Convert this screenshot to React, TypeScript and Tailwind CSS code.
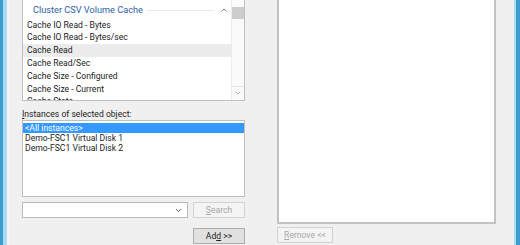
import { ChevronDown, ChevronUp } from "lucide-react";

const counters = [
  "Cache IO Read - Bytes",
  "Cache IO Read - Bytes/sec",
  "Cache Read",
  "Cache Read/Sec",
  "Cache Size - Configured",
  "Cache Size - Current",
  "Cache State",
];

const instances = ["<All instances>", "Demo-FSC1 Virtual Disk 1", "Demo-FSC1 Virtual Disk 2"];

const font = { fontFamily: 'Roboto, "Noto Sans", sans-serif' };

export default function App() {
  return (
    <div
      className="flex h-[245px] w-[520px] overflow-hidden bg-[#f0f0f0] text-[8.6px] leading-none text-[#1b1b1b]"
      style={font}
    >
      {/* window frame, left */}
      <div className="w-[3px] shrink-0 bg-[#3b9ccd]" />
      <div className="w-[4px] shrink-0 bg-[#a8dcf0]" />
      <div className="w-[2px] shrink-0 bg-[#f7f7f7]" />

      <div className="flex flex-1 pl-[13px]">
        {/* left column */}
        <div className="flex w-[223px] shrink-0 flex-col">
          <div className="flex h-[101px] border-x border-b border-[#bfbfbf] bg-white">
            <div className="relative flex-1 overflow-hidden">
              <div className="flex h-[18.5px] items-start pt-[4.5px] pl-[10px] pr-[3px]">
                <span className="text-[9.2px] text-[#2d62a6]">Cluster CSV Volume Cache</span>
                <div className="mr-[6px] ml-[4px] mt-[5px] h-px flex-1 bg-[#e6e9ee]" />
                <ChevronUp size={8} strokeWidth={2.2} className="mt-[1px] text-[#555]" />
              </div>
              {counters.map((c) => (
                <div
                  key={c}
                  className={`flex h-[12.8px] items-center pl-[4px] ${c === "Cache Read" ? "bg-[#ececec]" : ""}`}
                >
                  {c}
                </div>
              ))}
            </div>
            {/* scrollbar */}
            <div className="flex w-[13px] shrink-0 flex-col border-l border-[#ececec] bg-[#fafafa]">
              <div className="mt-[7px] h-[12px] bg-[#cdcdcd]" />
              <div className="flex-1" />
              <div className="mb-[2px] flex h-[12px] items-center justify-center border-t border-[#e4e4e4]">
                <ChevronDown size={8} strokeWidth={2} className="text-[#888]" />
              </div>
            </div>
          </div>

          <div className="flex h-[19px] items-start pt-[9px]">
            <span>
              <span className="underline">I</span>nstances of selected object:
            </span>
          </div>

          <div className="h-[77px] border border-[#bfbfbf] bg-white pt-[2px]">
            {instances.map((i, idx) => (
              <div
                key={i}
                className={`flex h-[10px] items-center pl-[2px] ${idx === 0 ? "bg-[#3399ff] text-white" : ""}`}
              >
                {i}
              </div>
            ))}
          </div>

          <div className="mt-[5px] flex h-[16px] gap-[5px]">
            <div className="flex flex-1 items-center justify-end border border-[#b9b9b9] bg-white pr-[4px]">
              <ChevronDown size={9} strokeWidth={2.4} className="text-[#444]" />
            </div>
            <div className="flex w-[52px] items-center justify-center border border-[#d2d2d2] bg-[#f4f4f4] text-[#a8a8a8]">
              <span>
                <span className="underline">S</span>earch
              </span>
            </div>
          </div>

          <div className="mt-[10px] flex justify-end">
            <div className="flex h-[16px] w-[52px] items-center justify-center border border-[#adadad] bg-[#e1e1e1]">
              <span>
                Ad<span className="underline">d</span> &gt;&gt;
              </span>
            </div>
          </div>
        </div>

        {/* right column */}
        <div className="ml-[32px] flex w-[219px] shrink-0 flex-col">
          <div className="h-[224px] border-x-2 border-b-2 border-[#c2c2c2] bg-white" />
          <div className="mt-[3px] flex h-[16px] w-[56px] items-center justify-center border border-[#d2d2d2] bg-[#f4f4f4] text-[#a8a8a8]">
            <span>
              <span className="underline">R</span>emove &lt;&lt;
            </span>
          </div>
        </div>

        <div className="flex-1" />
      </div>

      {/* window frame, right */}
      <div className="w-[2px] shrink-0 bg-[#a8dcf0]" />
      <div className="w-[4px] shrink-0 bg-[#3b9ccd]" />
    </div>
  );
}
